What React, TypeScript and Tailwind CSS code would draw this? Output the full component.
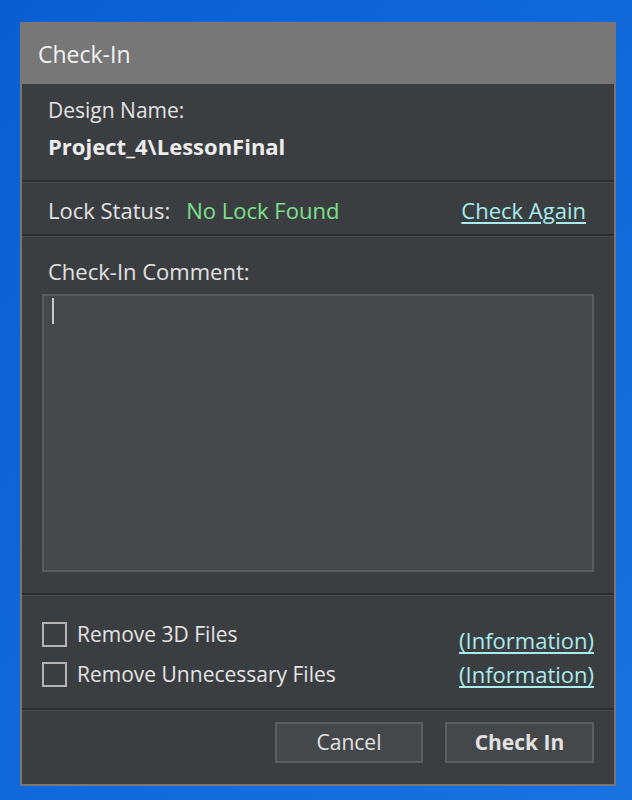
import { FC } from "react";

const font = { fontFamily: "'Open Sans', 'Noto Sans', sans-serif" };

// dark 2px line with a lighter 1px line below, between the dialog sections
const Separator: FC = () => (
  <div className="border-t-2 border-b border-t-[#2c2e30] border-b-[#484b4e]" />
);

const Checkbox: FC<{ label: string }> = ({ label }) => (
  <label className="flex items-center gap-[10px]">
    <span className="w-[25px] h-[25px] border-2 border-[#b4b4b4] bg-transparent" />
    <span className="text-[21px] text-[#e4e4e4] leading-none">{label}</span>
  </label>
);

const App: FC = () => {
  return (
    <div
      className="w-[632px] h-[800px] pt-[22px] pl-[20px] bg-gradient-to-br from-[#0a5fd0] via-[#1168d8] to-[#1a72e0]"
      style={font}
    >
      <div className="w-[596px] h-[764px] border-2 border-[#777777] bg-[#3b3e41] flex flex-col">
        {/* Title */}
        <div className="h-[60px] bg-[#777777] flex items-center pl-[16px]">
          <span className="text-[23px] text-[#f2f2f2] leading-none">Check-In</span>
        </div>

        {/* Design name */}
        <div className="h-[96px] px-[26px] pt-[12px]">
          <div className="text-[21px] text-[#e2e2e2] leading-[28px]">Design Name:</div>
          <div className="text-[22px] font-bold text-[#ececec] leading-[28px] mt-[8px]">
            Project_4\LessonFinal
          </div>
        </div>

        <Separator />

        {/* Lock status */}
        <div className="h-[51px] px-[26px] pt-[3px] flex items-center">
          <span className="text-[22px] text-[#e2e2e2]">Lock Status:</span>
          <span className="text-[22px] text-[#7ee08c] ml-[16px]">No Lock Found</span>
          <a className="ml-auto mr-[2px] text-[22px] text-[#a8ecec] underline underline-offset-[3px] cursor-pointer">
            Check Again
          </a>
        </div>

        <Separator />

        {/* Comment */}
        <div className="h-[356px] px-[20px] pt-[20px] flex flex-col">
          <div className="pl-[6px] text-[22px] text-[#e2e2e2] leading-[28px]">Check-In Comment:</div>
          <div className="mt-[9px] h-[278px] border-2 border-[#5a5d60] bg-[#45484b] relative">
            <span className="absolute left-[8px] top-[2px] w-[2px] h-[26px] bg-[#c8c8c8]" />
          </div>
        </div>

        <Separator />

        {/* Options */}
        <div className="h-[112px] px-[20px] pt-[26px] flex flex-col gap-[15px]">
          <div className="h-[25px] flex items-center justify-between">
            <Checkbox label="Remove 3D Files" />
            <a className="text-[22px] text-[#a8ecec] underline underline-offset-[3px] mt-[12px] cursor-pointer">
              (Information)
            </a>
          </div>
          <div className="h-[25px] flex items-center justify-between">
            <Checkbox label="Remove Unnecessary Files" />
            <a className="text-[22px] text-[#a8ecec] underline underline-offset-[3px] cursor-pointer">
              (Information)
            </a>
          </div>
        </div>

        <Separator />

        {/* Buttons */}
        <div className="flex-1 px-[20px] pt-[11px] flex justify-end gap-[22px]">
          <button className="w-[148px] h-[41px] border-2 border-[#5c5f62] bg-[#45484b] text-[21px] text-[#e2e2e2] leading-none">
            Cancel
          </button>
          <button className="w-[149px] h-[41px] border-2 border-[#5c5f62] bg-[#45484b] text-[21px] font-bold text-[#e2e2e2] leading-none">
            Check In
          </button>
        </div>
      </div>
    </div>
  );
};

export default App;
